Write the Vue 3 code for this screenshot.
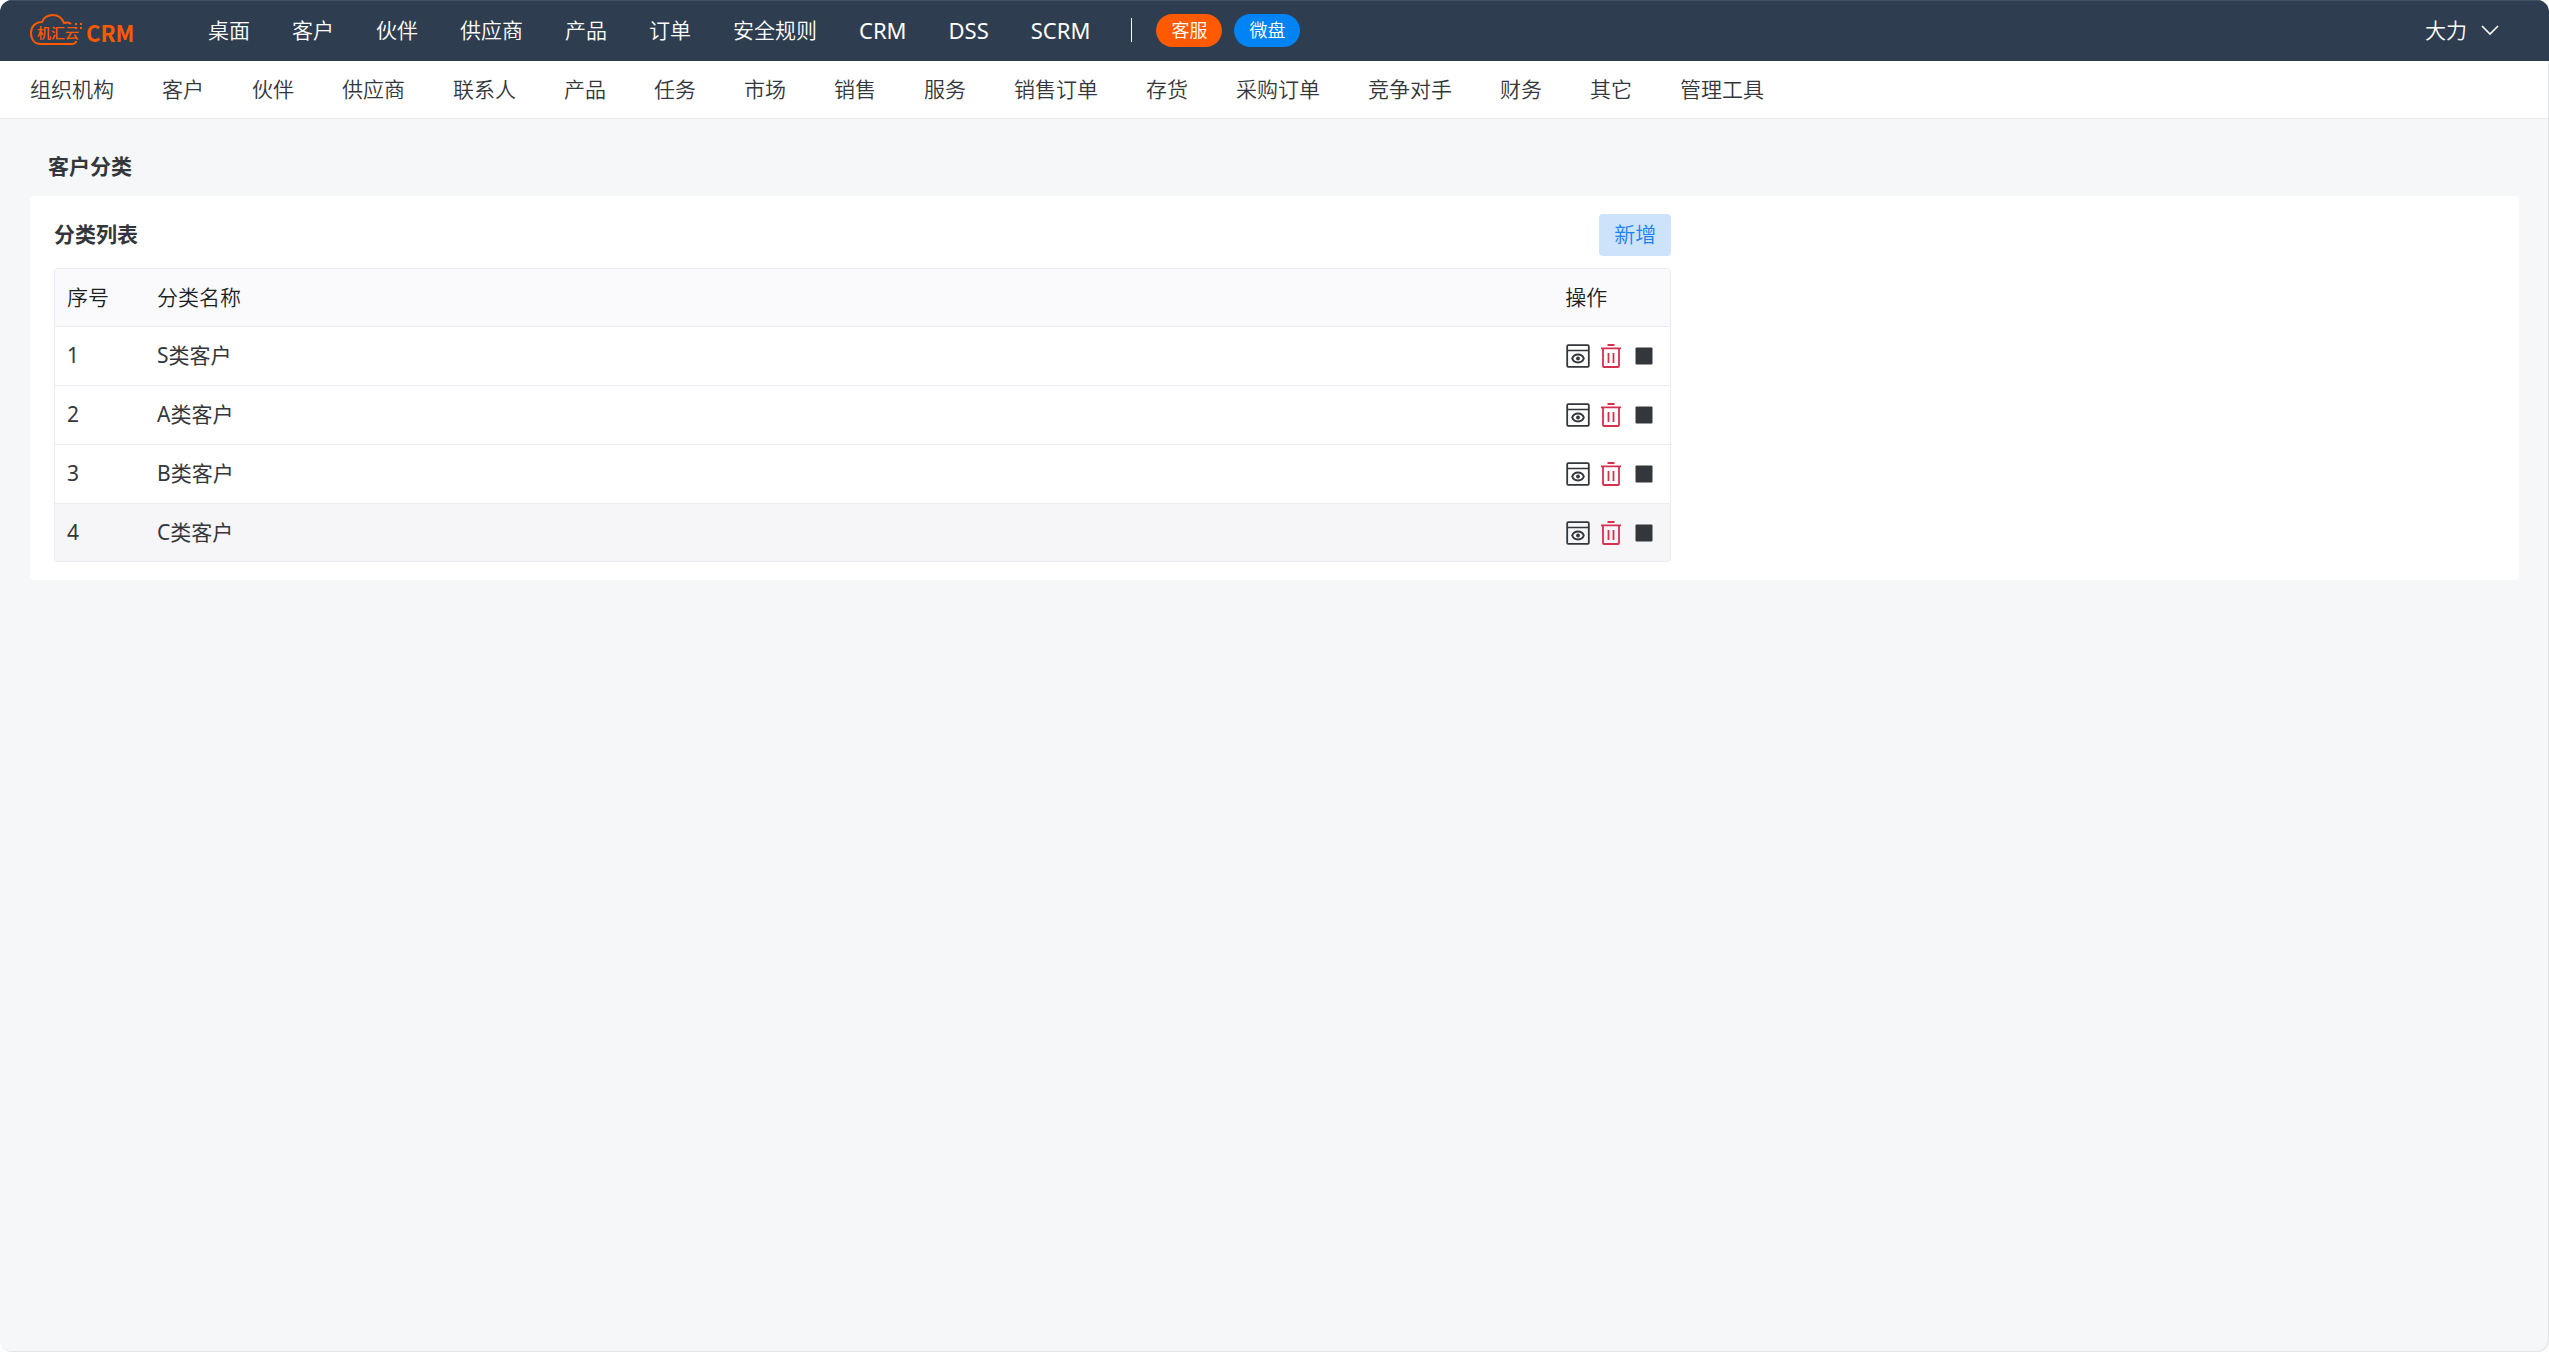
<!-- App.vue -->
<template>
  <div class="page">
    <header class="top-bar">
      <a href="#" class="logo" aria-label="机汇云 CRM">
        <svg class="logo-cloud" width="54" height="38" viewBox="0 2 54 38" fill="none" stroke="#ff5a00" stroke-width="2">
          <path d="M46 32 C46 34 44 35 41 35 H11 C5 35 1 31 1 24 C1 18 5 13 12 13 C14 8 18 6 23 6 C28 6 32 9 34 14 C37 13 39 13 41 15" />
          <path d="M45 15h2M50 15h2M45 19h2M50 19h2" />
          <text x="7" y="29" class="cloud-text">机汇云</text>
        </svg>
        <span class="logo-text">CRM</span>
      </a>
      <nav class="main-nav" aria-label="主导航">
        <a v-for="item in mainMenu" :key="item" href="#" :class="{ latin: /^[A-Z]+$/.test(item) }">{{ item }}</a>
      </nav>
      <span class="divider"></span>
      <a href="#" class="badge badge-service">客服</a>
      <a href="#" class="badge badge-disk">微盘</a>
      <button type="button" class="user-btn">
        大力
        <svg width="18" height="18" viewBox="0 0 18 18" fill="none" stroke="currentColor" stroke-width="1.6">
          <path d="M1 5l8 8 8-8" />
        </svg>
      </button>
    </header>

    <nav class="sub-nav" aria-label="设置导航">
      <a v-for="item in subMenu" :key="item" href="#">{{ item }}</a>
    </nav>

    <main class="content">
      <h1 class="page-title">客户分类</h1>
      <section class="panel">
        <div class="panel-col">
          <div class="panel-header">
            <h2>分类列表</h2>
            <button type="button" class="add-btn">新增</button>
          </div>
          <div class="table-wrap">
            <table>
              <thead>
                <tr>
                  <th class="col-index">序号</th>
                  <th>分类名称</th>
                  <th class="col-action">操作</th>
                </tr>
              </thead>
              <tbody>
                <tr v-for="(row, i) in rows" :key="row" :class="{ active: i === activeRow }" @mouseenter="activeRow = i">
                  <td>{{ i + 1 }}</td>
                  <td>{{ row }}</td>
                  <td>
                    <div class="actions">
                      <button type="button" aria-label="查看">
                        <svg width="24" height="24" viewBox="0 0 24 24" fill="none" stroke="#33373b">
                          <rect x="1.2" y="1.2" width="21.6" height="21.6" rx="1" stroke-width="1.8" />
                          <path d="M1.5 6.5H22.5" stroke-width="1.5" />
                          <path d="M6.2 14.5C8.2 9.2 15.8 9.2 17.8 14.5C15.8 19.8 8.2 19.8 6.2 14.5Z" stroke-width="2" />
                          <circle cx="12" cy="14.5" r="1.9" fill="#33373b" stroke="none" />
                        </svg>
                      </button>
                      <button type="button" aria-label="删除">
                        <svg width="24" height="24" viewBox="0 0 24 24" fill="none" stroke="#d6304f" stroke-width="1.8">
                          <path d="M8.5 1H15.5M2 4.3H22M4 4.3V22a1 1 0 0 0 1 1H19a1 1 0 0 0 1-1V4.3M9.5 9V19M14.5 9V19" />
                        </svg>
                      </button>
                      <button type="button" aria-label="停用">
                        <svg width="24" height="24" viewBox="0 0 24 24">
                          <rect x="3.5" y="3.5" width="17" height="17" rx="1" fill="#33373b" />
                        </svg>
                      </button>
                    </div>
                  </td>
                </tr>
              </tbody>
            </table>
          </div>
        </div>
      </section>
    </main>
  </div>
</template>

<script setup>
import { ref } from 'vue';

// 顶部主菜单
const mainMenu = ['桌面', '客户', '伙伴', '供应商', '产品', '订单', '安全规则', 'CRM', 'DSS', 'SCRM'];

// 二级菜单
const subMenu = [
  '组织机构', '客户', '伙伴', '供应商', '联系人', '产品', '任务', '市场', '销售', '服务',
  '销售订单', '存货', '采购订单', '竞争对手', '财务', '其它', '管理工具'
];

const rows = ['S类客户', 'A类客户', 'B类客户', 'C类客户'];

// 当前高亮行
const activeRow = ref(3);
</script>

<style>
body {
  margin: 0;
  background: #fff;
}
</style>

<style scoped>
.page {
  min-height: 100vh;
  box-sizing: border-box;
  overflow: hidden;
  border-radius: 12px;
  background: #f5f7f9;
  box-shadow: inset -1px -1px 0 #e2e4e6;
  color: #33373b;
  font-family: 'Noto Sans', 'Noto Sans CJK SC', sans-serif;
  font-size: 21px;
  font-weight: 350;
  line-height: 30px;
}

a {
  color: inherit;
  text-decoration: none;
}

button {
  border: none;
  background: none;
  padding: 0;
  font: inherit;
  color: inherit;
  cursor: pointer;
}

.top-bar {
  display: flex;
  align-items: center;
  height: 61px;
  box-sizing: border-box;
  padding: 0 50px 2px 30px;
  border-top: 1px solid #415263;
  background: #2e3e50;
  color: #fff;
}

.logo {
  display: flex;
  align-items: center;
  width: 157px;
  color: #ff5a00;
}

.cloud-text {
  fill: #ff5a00;
  stroke: none;
  font-size: 14px;
  font-weight: 500;
}

.logo-text {
  margin: 3px 0 0 2px;
  font-family: 'Noto Sans CJK SC', sans-serif;
  font-weight: 700;
  font-size: 22px;
}

.main-nav {
  display: flex;
}

.main-nav a {
  padding: 0 21px;
}

.main-nav .latin {
  font-size: 22px;
  font-weight: 400;
}

.divider {
  width: 1px;
  height: 24px;
  margin: 0 24px 0 20px;
  background: #fff;
}

.badge {
  margin-right: 12px;
  padding: 0 15px;
  border-radius: 17px;
  font-size: 18px;
  line-height: 33px;
}

.badge-service {
  background: #ff5a00;
}

.badge-disk {
  background: #0083f5;
}

.user-btn {
  display: flex;
  align-items: center;
  gap: 14px;
  margin-left: auto;
}

.sub-nav {
  display: flex;
  gap: 48px;
  padding: 13px 30px 14px;
  border-bottom: 1px solid #e7e9eb;
  margin-right: 1px;
  background: #fff;
}

.content {
  padding: 0 30px;
}

.page-title {
  margin: 0;
  padding: 32px 18px 15px;
  font-size: 21px;
  font-weight: 700;
}

.panel {
  border-radius: 4px;
  background: #fff;
}

.panel-col {
  width: 66.667%;
  box-sizing: border-box;
  padding: 18px 18px 18px 24px;
}

.panel-header {
  display: flex;
  align-items: center;
  justify-content: space-between;
  margin-bottom: 12px;
}

.panel-header h2 {
  margin: 0;
  padding-bottom: 2px;
  font-size: 21px;
  font-weight: 700;
}

.add-btn {
  padding: 5px 15px 7px;
  border-radius: 4px;
  background: #cde3fc;
  color: #1f80f2;
}

.table-wrap {
  border: 1px solid #ebebf3;
  border-radius: 4px;
  overflow: hidden;
}

table {
  width: 100%;
  table-layout: fixed;
  border-collapse: separate;
  border-spacing: 0;
}

th,
td {
  height: 58px;
  box-sizing: border-box;
  padding: 0 12px 2px;
  border-bottom: 1px solid #ebebf3;
  text-align: left;
  font-weight: inherit;
}

th {
  background: #fafafc;
  color: #1c1f23;
}

tbody td {
  height: 59px;
  font-weight: 400;
}

tbody td:last-child {
  padding: 0 13px;
}

tbody tr:last-child td {
  height: 57px;
  border-bottom: none;
}

.active td {
  background: #f6f6f9;
}

.col-index {
  width: 90px;
}

.col-action {
  width: 117px;
}

.actions {
  display: flex;
  gap: 9px;
}

.actions button,
.actions svg {
  display: block;
}
</style>
